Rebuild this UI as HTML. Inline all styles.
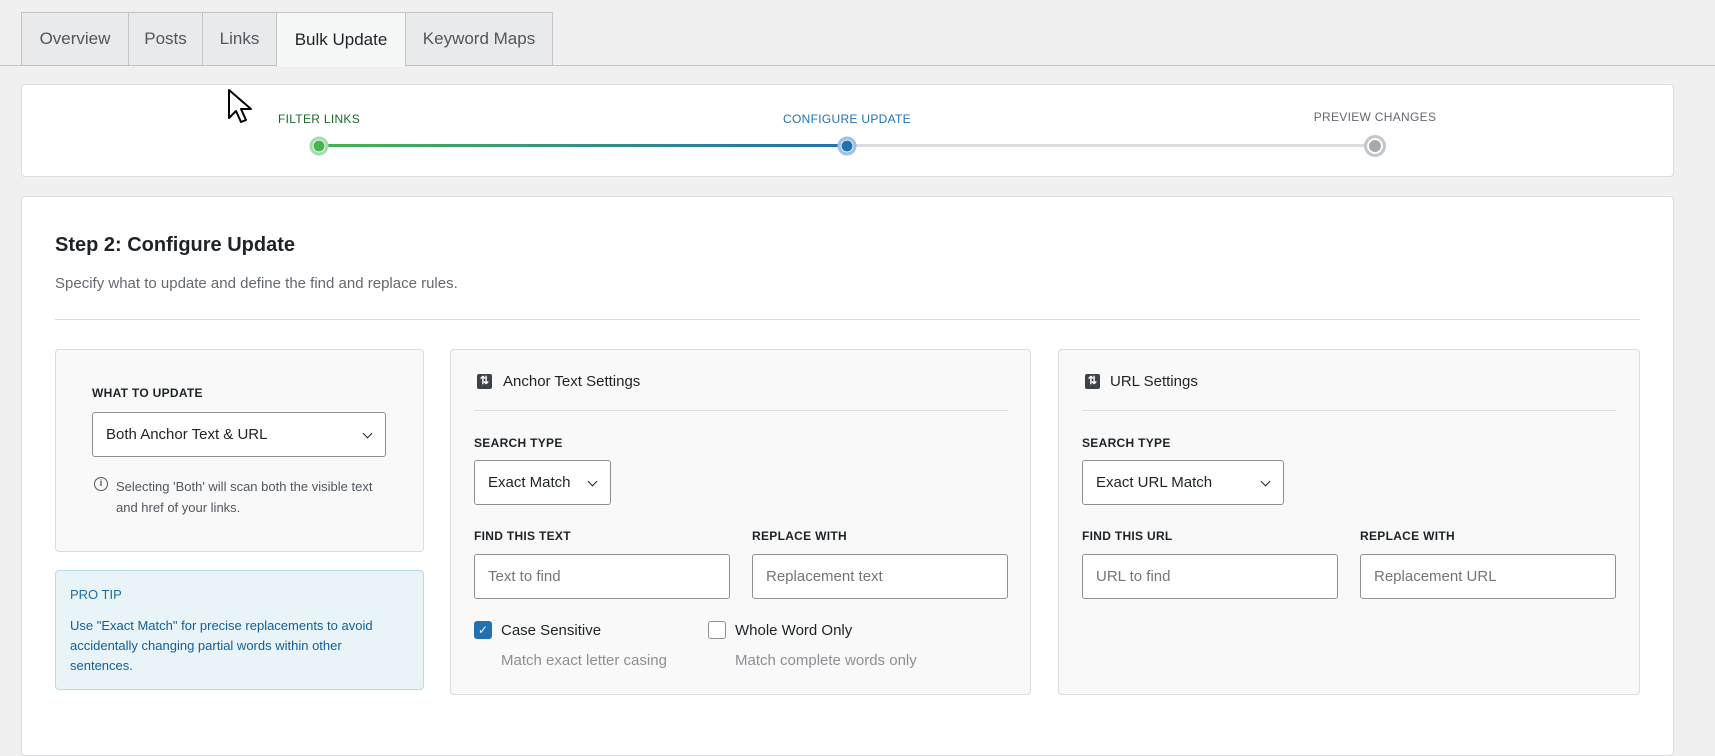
<!DOCTYPE html>
<html><head><meta charset="utf-8"><style>
*{box-sizing:border-box;margin:0;padding:0}
body{width:1715px;height:713px;overflow:hidden;background:#f0f0f1;font-family:"Liberation Sans",sans-serif;color:#1d2327;position:relative}
.a{position:absolute}
.tab{position:absolute;top:12px;height:54px;border:1px solid #c3c4c7;background:#e9eaec;font-size:17px;color:#50575e;display:flex;align-items:center;justify-content:center}
.card{position:absolute;background:#fff;border:1px solid #dcdcde;border-radius:4px}
.box{position:absolute;background:#f9f9f9;border:1px solid #dcdcde;border-radius:4px}
.lbl{position:absolute;font-size:12px;font-weight:bold;letter-spacing:.3px;color:#1d2327}
.inp{position:absolute;height:45px;border:1px solid #8c8f94;border-radius:3px;background:#fff;font-size:15px;display:flex;align-items:center;padding-left:13px;color:#1d2327}
.ph{color:#757575}
.chev{position:absolute;right:14px;top:17px;width:7px;height:7px;border-right:1.5px solid #1d2327;border-bottom:1.5px solid #1d2327;transform:rotate(45deg)}
.st{position:absolute;font-size:12px;letter-spacing:.3px;transform:translateX(-50%)}
.dot{position:absolute;width:19px;height:19px;border-radius:50%;transform:translate(-50%,-50%)}
.ico{position:absolute;width:15px;height:15px;background:#3c434a;border-radius:2px;color:#fff;font-size:11px;font-weight:bold;line-height:15px;text-align:center}
</style></head><body>
<div class="a" style="left:0;top:65px;width:1715px;height:1px;background:#c3c4c7"></div>
<div class="tab" style="left:21px;width:108px">Overview</div>
<div class="tab" style="left:128px;width:75px">Posts</div>
<div class="tab" style="left:202px;width:75px">Links</div>
<div class="tab" style="left:276px;width:130px;background:#f6f7f7;color:#1d2327;border-bottom-color:#f6f7f7;height:55px">Bulk Update</div>
<div class="tab" style="left:405px;width:148px">Keyword Maps</div>

<div class="card" style="left:21px;top:84px;width:1653px;height:93px"></div>
<div class="a" style="left:319px;top:144px;width:528px;height:3px;background:linear-gradient(90deg,#46b450,#2271b1)"></div>
<div class="a" style="left:847px;top:144px;width:528px;height:3px;background:#dcdcde"></div>
<div class="st" style="left:319px;top:112px;color:#1a6b2a">FILTER LINKS</div>
<div class="st" style="left:847px;top:112px;color:#2271b1">CONFIGURE UPDATE</div>
<div class="st" style="left:1375px;top:110px;color:#646970">PREVIEW CHANGES</div>
<div class="dot" style="left:319px;top:146px;background:#46b450;border:3px solid #a6dcaa;box-shadow:inset 0 0 0 1px #fff"></div>
<div class="dot" style="left:847px;top:146px;background:#2271b1;border:3px solid #9ec2e6;box-shadow:inset 0 0 0 1px #fff"></div>
<div class="dot" style="left:1375px;top:146px;background:#a7aaad;border:3px solid #c3c6cc;box-shadow:inset 0 0 0 2px #fff;width:22px;height:22px"></div>

<div class="card" style="left:21px;top:196px;width:1653px;height:560px"></div>
<div class="a" style="left:55px;top:234px;font-size:20px;font-weight:bold;color:#1d2327">Step 2: Configure Update</div>
<div class="a" style="left:55px;top:275px;font-size:15px;color:#646970">Specify what to update and define the find and replace rules.</div>
<div class="a" style="left:55px;top:319px;width:1585px;height:1px;background:#dcdcde"></div>

<div class="box" style="left:55px;top:349px;width:369px;height:203px"></div>
<div class="lbl" style="left:92px;top:386px">WHAT TO UPDATE</div>
<div class="inp" style="left:92px;top:412px;width:294px">Both Anchor Text &amp; URL<span class="chev"></span></div>
<div class="a" style="left:94px;top:477px;width:14px;height:14px;border:1.5px solid #50575e;border-radius:50%;font-size:9px;font-weight:bold;text-align:center;line-height:11px;color:#50575e">i</div>
<div class="a" style="left:116px;top:476px;font-size:13px;line-height:21px;color:#50575e;width:270px">Selecting 'Both' will scan both the visible text and href of your links.</div>

<div class="a" style="left:55px;top:570px;width:369px;height:120px;background:#e8f4f7;border:1px solid #bcdbe8;border-radius:4px"></div>
<div class="a" style="left:70px;top:587px;font-size:13px;color:#1e6f9f">PRO TIP</div>
<div class="a" style="left:70px;top:616px;font-size:13px;line-height:20px;color:#135e96;width:310px">Use "Exact Match" for precise replacements to avoid accidentally changing partial words within other sentences.</div>

<div class="box" style="left:450px;top:349px;width:581px;height:346px"></div>
<div class="ico" style="left:477px;top:374px">⇅</div>
<div class="a" style="left:503px;top:373px;font-size:15px;color:#1d2327">Anchor Text Settings</div>
<div class="a" style="left:474px;top:410px;width:534px;height:1px;background:#dcdcde"></div>
<div class="lbl" style="left:474px;top:436px">SEARCH TYPE</div>
<div class="inp" style="left:474px;top:460px;width:137px">Exact Match<span class="chev"></span></div>
<div class="lbl" style="left:474px;top:529px">FIND THIS TEXT</div>
<div class="lbl" style="left:752px;top:529px">REPLACE WITH</div>
<div class="inp ph" style="left:474px;top:554px;width:256px">Text to find</div>
<div class="inp ph" style="left:752px;top:554px;width:256px">Replacement text</div>
<div class="a" style="left:474px;top:621px;width:18px;height:18px;background:#2271b1;border-radius:3px;color:#fff;font-size:12px;line-height:18px;text-align:center">✓</div>
<div class="a" style="left:501px;top:622px;font-size:15px">Case Sensitive</div>
<div class="a" style="left:501px;top:652px;font-size:15px;color:#8c8f94">Match exact letter casing</div>
<div class="a" style="left:708px;top:621px;width:18px;height:18px;background:#fff;border:1px solid #8c8f94;border-radius:3px"></div>
<div class="a" style="left:735px;top:622px;font-size:15px">Whole Word Only</div>
<div class="a" style="left:735px;top:652px;font-size:15px;color:#8c8f94">Match complete words only</div>

<div class="box" style="left:1058px;top:349px;width:582px;height:346px"></div>
<div class="ico" style="left:1085px;top:374px">⇅</div>
<div class="a" style="left:1110px;top:373px;font-size:15px;color:#1d2327">URL Settings</div>
<div class="a" style="left:1082px;top:410px;width:534px;height:1px;background:#dcdcde"></div>
<div class="lbl" style="left:1082px;top:436px">SEARCH TYPE</div>
<div class="inp" style="left:1082px;top:460px;width:202px">Exact URL Match<span class="chev"></span></div>
<div class="lbl" style="left:1082px;top:529px">FIND THIS URL</div>
<div class="lbl" style="left:1360px;top:529px">REPLACE WITH</div>
<div class="inp ph" style="left:1082px;top:554px;width:256px">URL to find</div>
<div class="inp ph" style="left:1360px;top:554px;width:256px">Replacement URL</div>

<svg class="a" style="left:227px;top:88px" width="30" height="40" viewBox="0 0 30 40"><path d="M2 2 L2 30 L9 23 L14 34 L19 32 L14 21 L24 21 Z" fill="#fff" stroke="#000" stroke-width="2" stroke-linejoin="round"/></svg>
</body></html>
